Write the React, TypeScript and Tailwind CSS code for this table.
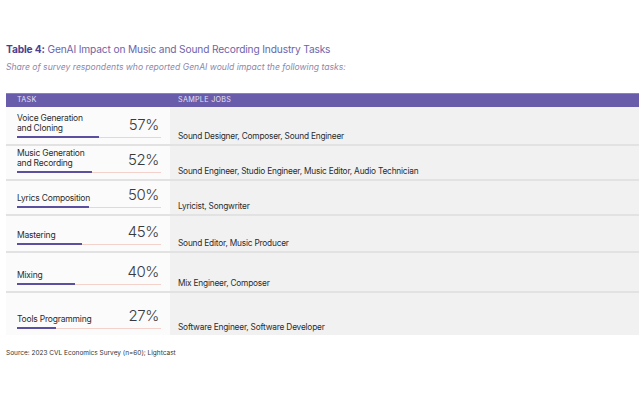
import React from 'react';

interface TaskRow {
  task: string[];
  pct: number;
  jobs: string;
  height: string;
}

const rows: TaskRow[] = [
  { task: ['Voice Generation', 'and Cloning'], pct: 57, jobs: 'Sound Designer, Composer, Sound Engineer', height: 'h-[39px]' },
  { task: ['Music Generation', 'and Recording'], pct: 52, jobs: 'Sound Engineer, Studio Engineer, Music Editor, Audio Technician', height: 'h-[35px]' },
  { task: ['Lyrics Composition'], pct: 50, jobs: 'Lyricist, Songwriter', height: 'h-[35px]' },
  { task: ['Mastering'], pct: 45, jobs: 'Sound Editor, Music Producer', height: 'h-[37px]' },
  { task: ['Mixing'], pct: 40, jobs: 'Mix Engineer, Composer', height: 'h-[40px]' },
  { task: ['Tools Programming'], pct: 27, jobs: 'Software Engineer, Software Developer', height: 'h-[42px]' },
];

function Row({ row, last }: { row: TaskRow; last: boolean }) {
  return (
    <div className={`flex ${row.height} ${last ? '' : 'border-b-2 border-[#e2e2e2]'}`}>
      {/* Task + share */}
      <div className="w-[164px] shrink-0 bg-[#fbfbfb] pl-[11px] pr-[11px] pb-[6px] flex flex-col justify-end">
        <div className="flex items-end justify-between">
          <div className="text-[8.5px] leading-[10px] tracking-[-0.2px] text-[#2b2b2b] pb-[1px]">
            {row.task.map((t) => (
              <div key={t}>{t}</div>
            ))}
          </div>
          <div className="text-[15px] leading-[15px] font-light tracking-[-0.4px] text-[#3a3a3a] pb-[2px]">
            {row.pct}%
          </div>
        </div>
        <div className="relative h-[2px] mt-[2px] -mr-[2px]">
          <div className="absolute left-0 right-0 top-[1px] h-px bg-[#f3d2cb]" />
          <div className="absolute left-0 top-0 h-[2px] bg-[#5b4f9f]" style={{ width: `${row.pct}%` }} />
        </div>
      </div>
      {/* Sample jobs */}
      <div className="flex-1 bg-[#f1f1f1] pl-[8px] pb-[3px] flex items-end">
        <span className="text-[8.3px] leading-[10px] tracking-[-0.2px] text-[#2b2b2b]">{row.jobs}</span>
      </div>
    </div>
  );
}

export default function App() {
  return (
    <div className="w-[642px] h-[399px] bg-white font-['Inter',sans-serif] overflow-hidden">
      <div className="pl-[6px] pr-[3px] pt-[43px]">
        <h1 className="text-[10.2px] leading-[13px] tracking-[-0.15px] text-[#6d64aa]">
          <span className="font-bold text-[#4a3f8e]">Table 4:</span> GenAI Impact on Music and Sound Recording Industry Tasks
        </h1>
        <p className="mt-[6px] text-[8.6px] leading-[11px] italic text-[#8d88ab]">
          Share of survey respondents who reported GenAI would impact the following tasks:
        </p>

        <div className="mt-[20px]">
          <div className="flex h-[14px] items-center bg-[#695cab] text-[7.2px] tracking-[0.3px] uppercase text-[#e4e0f4] border-t border-[#8b80c4]">
            <div className="w-[164px] pl-[11px]">Task</div>
            <div className="pl-[8px]">Sample Jobs</div>
          </div>
          {rows.map((r, i) => (
            <Row key={r.pct} row={r} last={i === rows.length - 1} />
          ))}
        </div>

        <p className="mt-[14px] text-[6.5px] leading-[8px] text-[#333]">
          Source: 2023 CVL Economics Survey (n=60); Lightcast
        </p>
      </div>
    </div>
  );
}
